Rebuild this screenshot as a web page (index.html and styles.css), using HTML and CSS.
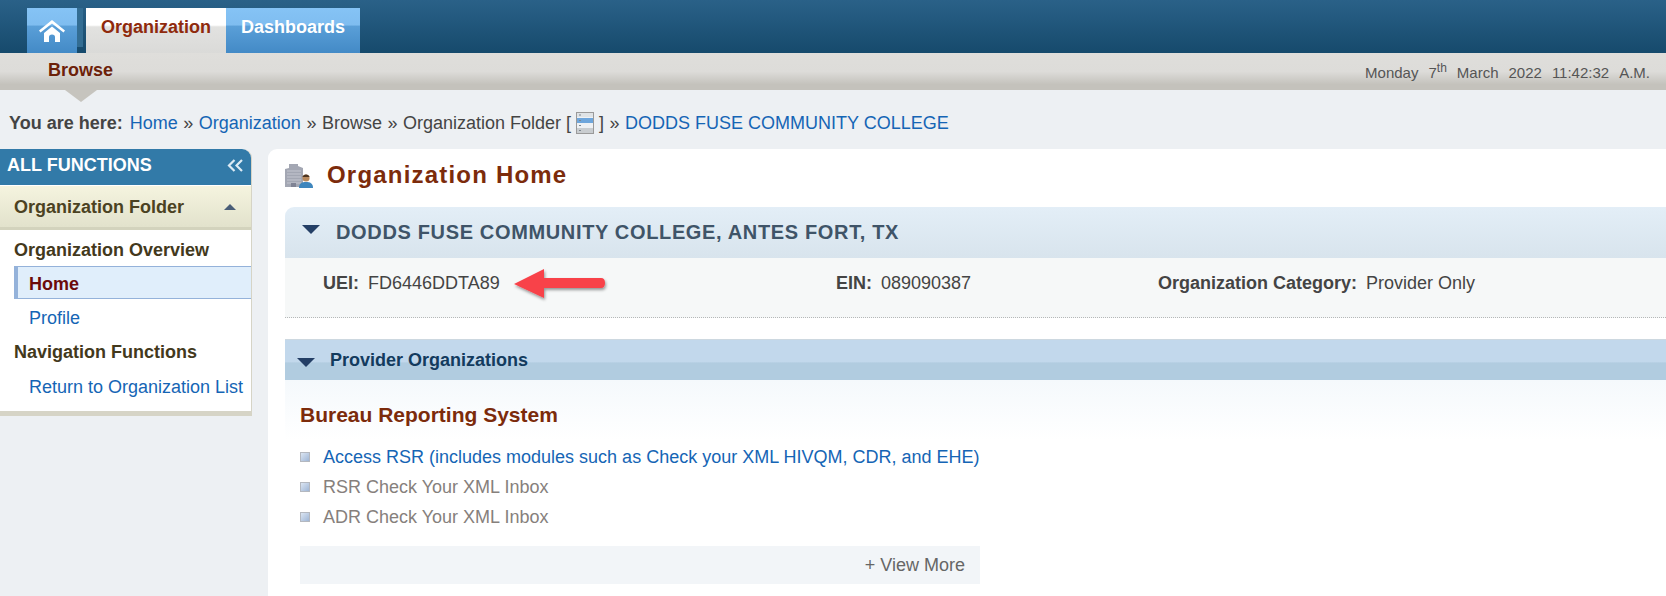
FILE: index.html
```html
<!DOCTYPE html>
<html lang="en">
<head>
  <meta charset="UTF-8">
  <meta name="viewport" content="width=device-width, initial-scale=1.0">
  <title>Organization Home</title>
  <link rel="stylesheet" href="styles.css">
</head>
<body>
  <div class="top-bar">
    <a class="tab tab-home" href="#">
      <svg width="28" height="24" viewBox="0 0 28 24">
        <path d="M1 11.500 L14 1 L27 11.500 L25.500 13.500 L14 4.500 L2.500 13.500 Z" fill="#fff"/>
        <path d="M6 14 L14 7.500 L22 14 V23 H17 V18 Q17 15.500 14 15.500 Q11 15.500 11 18 V23 H6 Z" fill="#fff"/>
      </svg>
    </a>
    <a class="tab tab-active" href="#">Organization</a>
    <a class="tab" href="#">Dashboards</a>
  </div>

  <div class="sub-bar">
    <a class="sub-link" href="#">Browse</a>
    <div class="clock">
      <span>Monday</span>
      <span>7<sup>th</sup></span>
      <span>March</span>
      <span>2022</span>
      <span>11:42:32</span>
      <span>A.M.</span>
    </div>
  </div>

  <div class="crumbs">
    <b>You are here:</b>
    <a href="#">Home</a> <span class="sep">»</span>
    <a href="#">Organization</a> <span class="sep">»</span>
    Browse <span class="sep">»</span>
    Organization Folder [
    <svg class="crumb-icon" width="18" height="22" viewBox="0 0 18 22">
      <rect x="0.5" y="0.5" width="17" height="21" fill="#eef1f4" stroke="#9a9a9a"/>
      <rect x="1" y="1" width="16" height="4" fill="#dfe3e6"/>
      <rect x="1" y="6" width="16" height="5" fill="#6ea6dc"/>
      <rect x="1" y="16" width="16" height="5" fill="#c9cdd0"/>
      <path d="M3 3h2M3 8.500h2M3 13.500h2M3 18.500h2" stroke="#7d8790"/>
    </svg>
    ] <span class="sep">»</span>
    <a href="#">DODDS FUSE COMMUNITY COLLEGE</a>
  </div>

  <div class="columns">
    <div class="sidebar">
      <div class="side-head">
        <span>ALL FUNCTIONS</span>
        <svg width="17" height="13" viewBox="0 0 17 13" fill="none" stroke="#dcebf5" stroke-width="2.200">
          <path d="M7.500 1 L2 6.500 L7.500 12"/>
          <path d="M15 1 L9.500 6.500 L15 12"/>
        </svg>
      </div>
      <div class="side-folder">
        <span>Organization Folder</span>
        <i class="caret-up"></i>
      </div>
      <div class="side-list">
        <div class="side-title">Organization Overview</div>
        <a class="side-link side-current" href="#">Home</a>
        <a class="side-link" href="#">Profile</a>
        <div class="side-title">Navigation Functions</div>
        <a class="side-link" href="#">Return to Organization List</a>
      </div>
    </div>

    <div class="main">
      <div class="page-title">
        <svg width="28" height="25" viewBox="0 0 28 25">
          <path d="M0 6 L4 5 V1 H13 V3 L18 5 V24 H0 Z" fill="#a3a7b3"/>
          <path d="M2 8h14M2 11h14M2 14h14M2 17h14M2 20h14" stroke="#c4c6d0"/>
          <path d="M6 24 V20 H11 V24 Z" fill="#7f8394"/>
          <path d="M14 25 C14 20 17 19 21 19 C25 19 28 20 28 25 Z" fill="#3f86bd"/>
          <circle cx="21" cy="15" r="3.600" fill="#b98a5e"/>
          <path d="M17.500 14 C18 10.500 24 10.500 24.500 14 Z" fill="#4d3522"/>
        </svg>
        <h1>Organization Home</h1>
      </div>

      <div class="org-band">
        <i class="caret-down"></i>
        <h2>DODDS FUSE COMMUNITY COLLEGE, ANTES FORT, TX</h2>
      </div>
      <div class="org-info">
        <div class="info-item info-uei"><b>UEI:</b> FD6446DDTA89</div>
        <div class="info-item info-ein"><b>EIN:</b> 089090387</div>
        <div class="info-item"><b>Organization Category:</b> Provider Only</div>
        <svg class="red-arrow" width="100" height="40" viewBox="0 0 100 40">
          <defs>
            <filter id="arrow-shadow" x="-10%" y="-20%" width="120%" height="150%">
              <feDropShadow dx="1" dy="2" stdDeviation="1.500" flood-color="#000" flood-opacity="0.400"/>
            </filter>
          </defs>
          <path d="M2 17 L32 2 L32 11 L89 11 Q93 11 93 16 Q93 21 89 21 L32 21 L32 31 Z" fill="#f8424a" filter="url(#arrow-shadow)"/>
        </svg>
      </div>

      <div class="prov-band">
        <i class="caret-down"></i>
        <h3>Provider Organizations</h3>
      </div>
      <div class="prov-body">
        <h4>Bureau Reporting System</h4>
        <ul class="prov-list">
          <li><a href="#">Access RSR (includes modules such as Check your XML HIVQM, CDR, and EHE)</a></li>
          <li>RSR Check Your XML Inbox</li>
          <li>ADR Check Your XML Inbox</li>
        </ul>
        <div class="view-more">+ View More</div>
      </div>
    </div>
  </div>
</body>
</html>
```

FILE: styles.css
```css
html, body {
  margin: 0;
  padding: 0;
  height: 596px;
  overflow: hidden;
  font-family: "Liberation Sans", Arial, sans-serif;
  font-size: 18px;
  background: #edf0f3;
  color: #444;
}
a {
  color: #1565b5;
  text-decoration: none;
}
.top-bar {
  display: flex;
  align-items: flex-end;
  height: 53px;
  padding-left: 27px;
  box-sizing: border-box;
  background: linear-gradient(#2a6188, #164a6c);
}
.tab {
  display: flex;
  align-items: center;
  justify-content: center;
  width: 134px;
  height: 45px;
  padding-bottom: 7px;
  box-sizing: border-box;
  font-weight: bold;
  color: #fff;
  background: linear-gradient(#85c3f5 0, #7fbdf0 38%, #5a9fd8 40%, #438ac6 100%);
}
.tab-home {
  width: 50px;
  padding-bottom: 0;
  margin-right: 9px;
  box-shadow: 9px -3px 0 -3px #336d93;
}
.tab-active {
  width: 140px;
  color: #8f2a0c;
  background: linear-gradient(#fff 0, #fff 38%, #e2e2e0 42%, #dadad8 100%);
}
.sub-bar {
  display: flex;
  justify-content: space-between;
  position: relative;
  height: 37px;
  padding: 0 16px 0 48px;
  box-sizing: border-box;
  background: linear-gradient(#dfdedb 0, #dddcd9 50%, #c4c2bc 85%, #c4c2bc 100%);
}
.sub-bar::after {
  content: "";
  position: absolute;
  left: 65px;
  top: 37px;
  border-left: 16px solid transparent;
  border-right: 16px solid transparent;
  border-top: 12px solid #c6c4be;
}
.sub-link {
  margin-top: 7px;
  font-weight: bold;
  color: #6c2109;
}
.clock {
  display: flex;
  gap: 10px;
  margin-top: 11px;
  font-size: 15px;
  color: #555;
}
.clock sup {
  font-size: 12px;
  line-height: 0;
}
.crumbs {
  height: 59px;
  padding: 20px 0 0 9px;
  box-sizing: border-box;
  line-height: 27px;
  white-space: nowrap;
}
.crumbs b {
  margin-right: 2px;
}
.sep {
  margin: 0 0.5px;
}
.crumb-icon {
  vertical-align: -5px;
}
.columns {
  display: grid;
  grid-template-columns: 252px 1fr;
  gap: 16px;
}
.sidebar {
  align-self: start;
  background: #fff;
  border-right: 1px solid #d6d4c6;
  border-bottom: 5px solid #d6d4c6;
  border-radius: 0 9px 0 0;
  box-sizing: border-box;
  height: 267px;
}
.side-head {
  display: flex;
  justify-content: space-between;
  align-items: center;
  height: 36px;
  padding: 0 7px 3px 7px;
  box-sizing: border-box;
  background: #327aa8;
  border-radius: 0 9px 0 0;
  font-weight: bold;
  color: #fff;
}
.side-folder {
  display: flex;
  justify-content: space-between;
  align-items: center;
  height: 44px;
  margin-top: 1px;
  padding: 1px 15px 0 14px;
  box-sizing: border-box;
  background: linear-gradient(#f5f4df, #e2e2cc);
  border-bottom: 3px solid #d3d3bd;
  font-weight: bold;
  color: #4b4222;
}
.caret-up {
  border-left: 6px solid transparent;
  border-right: 6px solid transparent;
  border-bottom: 6px solid #495d78;
}
.side-list {
  padding-top: 5px;
}
.side-title {
  height: 31px;
  padding-left: 14px;
  line-height: 31px;
  font-weight: bold;
  color: #43391c;
}
.side-link + .side-title {
  height: 33px;
  line-height: 33px;
}
.side-link {
  display: block;
  height: 36px;
  margin-left: 14px;
  padding-left: 15px;
  line-height: 36px;
}
.side-current {
  height: 33px;
  margin-bottom: 1px;
  padding-left: 11px;
  font-weight: bold;
  color: #6c0a0a;
  background: #e0eefb;
  border: 1px solid #94b2da;
  border-left: 4px solid #94b2da;
  border-right: 0;
  box-sizing: border-box;
  line-height: 34px;
}
.main {
  background: #fff;
  border-radius: 9px 0 0 0;
  padding-left: 17px;
  height: 460px;
}
.page-title {
  display: flex;
  align-items: center;
  gap: 14px;
  height: 58px;
  padding-bottom: 6px;
  box-sizing: border-box;
}
.page-title h1 {
  margin: 0;
  font-size: 24px;
  letter-spacing: 1.2px;
  color: #7c2b0b;
}
.org-band {
  display: flex;
  align-items: center;
  gap: 16px;
  height: 51px;
  padding-left: 17px;
  box-sizing: border-box;
  background: linear-gradient(#e3eef7, #d8e4ed);
  border-radius: 9px 0 0 0;
}
.org-band .caret-down {
  margin-top: -7px;
}
.caret-down {
  border-left: 9px solid transparent;
  border-right: 9px solid transparent;
  border-top: 9px solid #243f66;
}
.org-band h2 {
  margin: 0;
  font-size: 20px;
  letter-spacing: 0.65px;
  color: #3f5468;
}
.org-info {
  display: flex;
  position: relative;
  height: 60px;
  padding: 15px 0 0 38px;
  box-sizing: border-box;
  background: #f6f8f8;
  border-bottom: 1px dotted #b5b8b8;
}
.info-item b {
  margin-right: 4px;
}
.info-uei {
  width: 513px;
}
.info-ein {
  width: 322px;
}
.red-arrow {
  position: absolute;
  left: 227px;
  top: 9px;
}
.prov-band {
  display: flex;
  align-items: center;
  gap: 15px;
  height: 41px;
  margin-top: 21px;
  padding-left: 12px;
  box-sizing: border-box;
  background: linear-gradient(#c2d8ec 0, #c2d8ec 55%, #b1cce0 57%, #b1cce0 100%);
  border-top: 1px solid #cdd8e0;
}
.prov-band h3 {
  margin: 0;
  font-size: 18px;
  color: #133b5e;
}
.prov-band .caret-down {
  margin-top: 4px;
}
.prov-body {
  padding: 23px 0 0 15px;
  background: linear-gradient(#f5f9fc, #fff 60px);
}
.prov-body h4 {
  margin: 0 0 15px;
  font-size: 21px;
  line-height: 24px;
  color: #7c2b0b;
}
.prov-list {
  list-style: none;
  margin: 0;
  padding: 0;
  width: 680px;
  color: #86807c;
}
.prov-list li {
  display: flex;
  align-items: center;
  gap: 13px;
  height: 30px;
}
.prov-list li::before {
  content: "";
  width: 10px;
  height: 10px;
  box-sizing: border-box;
  background: linear-gradient(135deg, #dbe5f2, #9fb6d6);
  border: 1px solid #b4b8bf;
}
.view-more {
  width: 680px;
  height: 38px;
  margin-top: 14px;
  padding-right: 15px;
  box-sizing: border-box;
  background: #f2f5f8;
  text-align: right;
  line-height: 39px;
  color: #666;
}
```
